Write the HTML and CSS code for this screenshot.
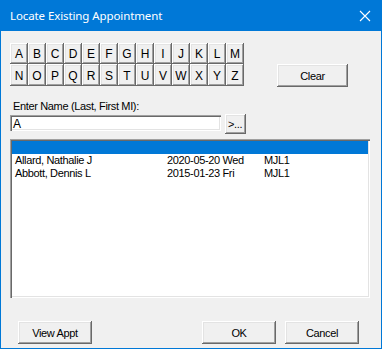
FILE: index.html
```html
<!DOCTYPE html>
<html lang="en">
<head>
    <meta charset="UTF-8">
    <title>Locate Existing Appointment</title>
    <link rel="stylesheet" href="styles.css">
</head>
<body>
    <div class="window">
        <div class="titlebar">
            <span class="title">Locate Existing Appointment</span>
            <svg class="close" width="12" height="12" viewBox="0 0 12 12">
                <path d="M1 1 L11 11 M11 1 L1 11" stroke="#fff" stroke-width="1.1" fill="none"/>
            </svg>
        </div>

        <div class="content">
            <!-- letters + clear -->
            <div class="top-row">
                <div class="letters">
                    <button class="btn letter">A</button><button class="btn letter">B</button><button class="btn letter">C</button><button class="btn letter">D</button><button class="btn letter">E</button><button class="btn letter">F</button><button class="btn letter">G</button><button class="btn letter">H</button><button class="btn letter">I</button><button class="btn letter">J</button><button class="btn letter">K</button><button class="btn letter">L</button><button class="btn letter">M</button>
                    <button class="btn letter">N</button><button class="btn letter">O</button><button class="btn letter">P</button><button class="btn letter">Q</button><button class="btn letter">R</button><button class="btn letter">S</button><button class="btn letter">T</button><button class="btn letter">U</button><button class="btn letter">V</button><button class="btn letter">W</button><button class="btn letter">X</button><button class="btn letter">Y</button><button class="btn letter">Z</button>
                </div>
                <button class="btn clear">Clear</button>
            </div>

            <!-- name entry -->
            <div class="name-label">Enter Name (Last, First MI):</div>
            <div class="name-row">
                <div class="name-input">A</div>
                <button class="btn more">&gt;...</button>
            </div>

            <!-- results -->
            <div class="list">
                <div class="row selected"><span class="c-name"></span><span class="c-date"></span><span class="c-code"></span></div>
                <div class="row"><span class="c-name">Allard, Nathalie J</span><span class="c-date">2020-05-20 Wed</span><span class="c-code">MJL1</span></div>
                <div class="row"><span class="c-name">Abbott, Dennis L</span><span class="c-date">2015-01-23 Fri</span><span class="c-code">MJL1</span></div>
            </div>

            <div class="bottom-row">
                <button class="btn big view">View Appt</button>
                <button class="btn big ok">OK</button>
                <button class="btn big cancel">Cancel</button>
            </div>
        </div>
    </div>
</body>
</html>
```

FILE: styles.css
```css
body {
    margin: 0;
    background: #f0f0f0;
    font-family: "Liberation Sans", Arial, sans-serif;
    font-size: 11px;
    letter-spacing: -0.35px;
    color: #000;
}
.window {
    width: 380px;
    height: 348px;
    border: 1px solid #0078d7;
    border-top: none;
    background: #f0f0f0;
}
.titlebar {
    height: 31px;
    margin: 0 -1px;
    background: #0078d7;
    display: flex;
    align-items: center;
    justify-content: space-between;
    padding: 0 10px 0 10px;
    color: #fff;
}
.title {
    font-family: "Noto Sans", "Open Sans", sans-serif;
    font-size: 11.5px;
    letter-spacing: -0.1px;
    margin-top: -1px;
}
.close {
    margin-right: 1px;
}
.content {
    padding: 12px 0 0 9px;
}
.btn {
    font-family: "Liberation Sans", Arial, sans-serif;
    font-size: 11px;
    letter-spacing: -0.35px;
    color: #000;
    background: #f0f0f0;
    border: none;
    padding: 0;
    margin: 0;
    box-shadow: inset -1px -1px #696969, inset 1px 1px #fff, inset -2px -2px #a0a0a0, inset 2px 2px #e3e3e3;
}
.top-row {
    display: flex;
    align-items: flex-start;
}
.letters {
    display: grid;
    grid-template-columns: repeat(13, 18px);
    grid-template-rows: 21px 22px;
    width: 234px;
}
.letter {
    width: 18px;
    height: 100%;
    font-size: 12px;
    letter-spacing: 0;
    padding-top: 1px;
}
.clear {
    width: 71px;
    height: 23px;
    margin: 21px 0 0 33px;
}
.name-label {
    margin: 13px 0 0 3px;
    line-height: 13px;
}
.name-row {
    display: flex;
    align-items: flex-start;
    margin-top: 1px;
}
.name-input {
    width: 206px;
    height: 14px;
    margin-top: 1px;
    padding: 2px 2px 0 3px;
    background: #fff;
    line-height: 14px;
    font-size: 12px;
    box-shadow: inset 1px 1px #a0a0a0, inset 2px 2px #696969, inset -1px -1px #fff, inset -2px -2px #e3e3e3;
}
.more {
    width: 21px;
    height: 20px;
    margin-left: 4px;
    text-align: left;
    padding-left: 3px;
}
.list {
    width: 356px;
    height: 155px;
    margin-top: 5px;
    padding: 2px;
    background: #fff;
    box-shadow: inset 1px 1px #a0a0a0, inset 2px 2px #696969, inset -1px -1px #fff, inset -2px -2px #e3e3e3;
}
.row {
    display: flex;
    height: 13px;
    line-height: 13px;
    white-space: nowrap;
}
.row.selected {
    background: #0078d7;
}
.c-name {
    width: 152px;
    padding-left: 3px;
}
.c-date {
    width: 97px;
}
.bottom-row {
    display: flex;
    margin-top: 23px;
}
.big {
    width: 74px;
    height: 23px;
}
.view {
    margin-left: 8px;
}
.ok {
    margin-left: 110px;
}
.cancel {
    margin-left: 9px;
}
```
